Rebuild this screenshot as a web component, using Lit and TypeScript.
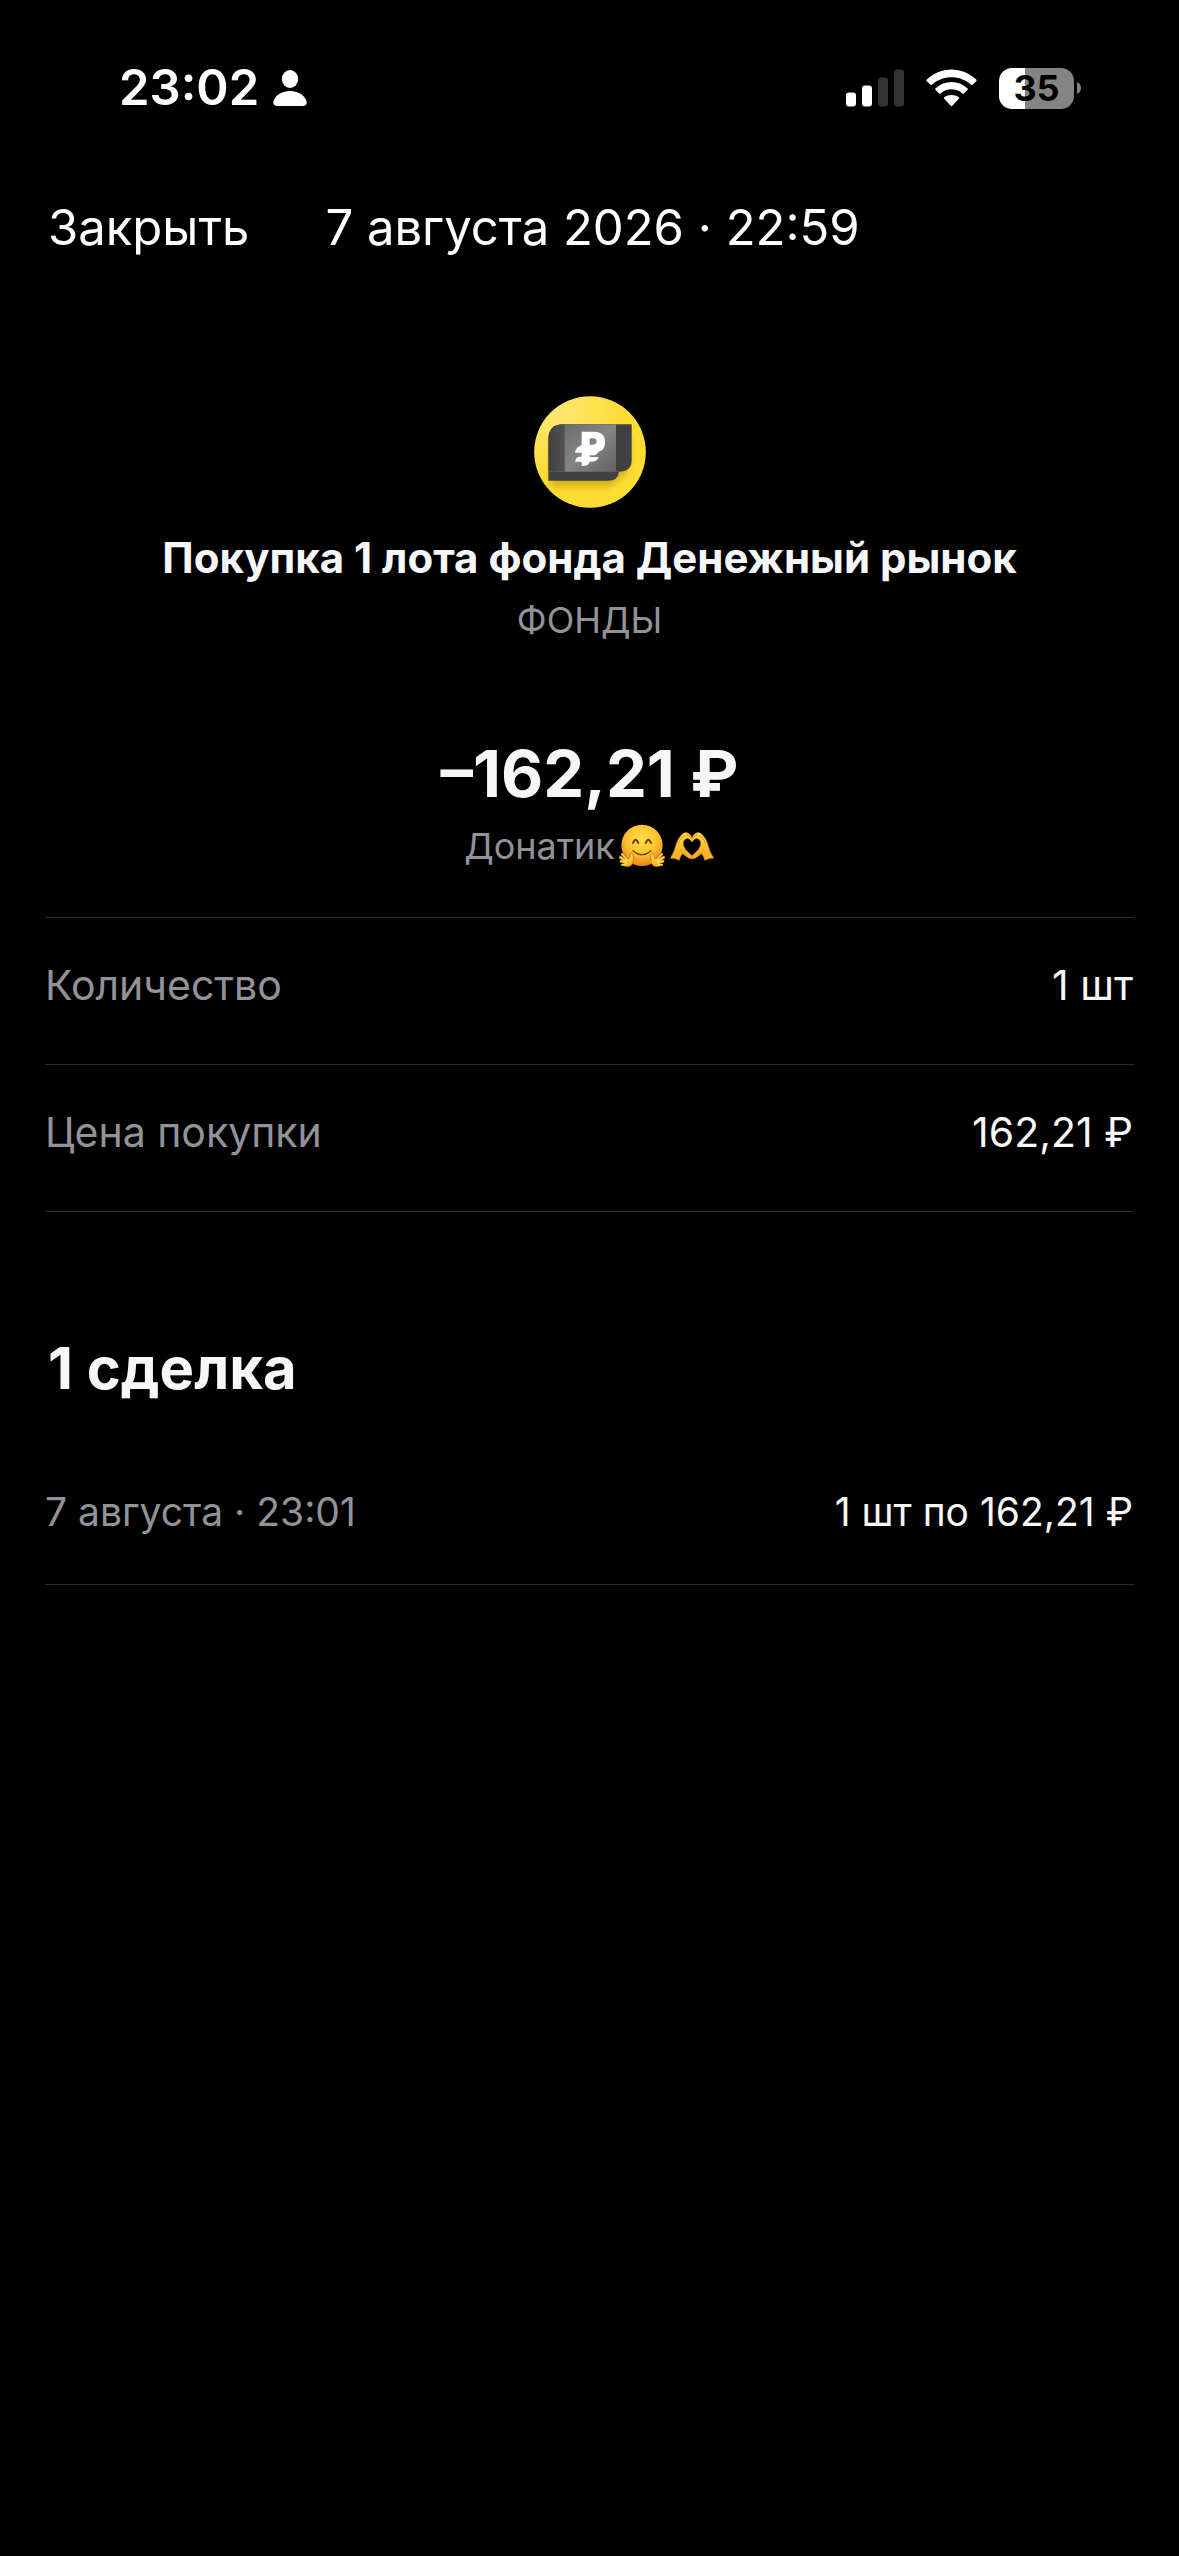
import { LitElement, html, css } from "lit";
import { customElement, property } from "lit/decorators.js";

@customElement("status-bar")
class StatusBar extends LitElement {
  static styles = css`
    :host { display: block; }
    .bar { display: flex; align-items: center; justify-content: space-between; height: 60px; padding: 0 98px 0 119px; }
    .left { display: flex; align-items: center; gap: 14px; }
    .right { display: flex; align-items: center; gap: 22px; }
    .time { font-size: 49px; line-height: 60px; font-weight: 600; }
    svg { display: block; }
    .battery { display: flex; align-items: center; gap: 3px; }
    .cell {
      display: flex; align-items: center; justify-content: center; width: 75px; height: 41px; border-radius: 13px;
      background: linear-gradient(90deg, #fff 35%, #848484 35%);
      color: #000; font-size: 36px; line-height: 41px; font-weight: 700;
    }
  `;
  render() {
    return html`<div class="bar">
      <div class="left">
        <time class="time">23:02</time>
        <svg width="34" height="37" viewBox="0 0 34 37" fill="#fff" aria-hidden="true">
          <ellipse cx="17" cy="9" rx="8.2" ry="9" />
          <path d="M4 36 Q0.3 36 0.3 32.6 C0.8 26.5 8 21 17 21 S33.2 26.5 33.7 32.6 Q33.7 36 30 36 Z" />
        </svg>
      </div>
      <div class="right">
        <svg width="58" height="38" viewBox="0 0 58 38" aria-hidden="true">
          <rect x="0" y="23.5" width="10" height="14" rx="3" fill="#fff" />
          <rect x="16" y="16.5" width="10" height="21" rx="3" fill="#fff" />
          <rect x="32" y="8.5" width="10" height="29" rx="3" fill="#333" />
          <rect x="48" y="0.5" width="10" height="37" rx="3" fill="#333" />
        </svg>
        <svg width="51" height="38" viewBox="0 0 51 38" fill="#fff" aria-hidden="true">
          <path d="M0.8 10.6 Q0 11.4 0.8 12.2 L4.5 15.8 Q5.2 16.4 5.9 15.8 C16.5 5.6 34.5 5.6 45.1 15.8 Q45.8 16.4 46.5 15.8 L50.2 12.2 Q51 11.4 50.2 10.6 C36.5 -2.9 14.5 -2.9 0.8 10.6 Z" />
          <path d="M9.4 19.4 Q8.7 20.1 9.4 20.8 L13.1 24.4 Q13.8 25.1 14.6 24.4 C20.6 18.8 30.4 18.8 36.4 24.4 Q37.2 25.1 37.9 24.4 L41.6 20.8 Q42.3 20.1 41.6 19.4 C32.6 10.8 18.4 10.8 9.4 19.4 Z" />
          <path d="M18.2 28.2 Q17.5 29 18.2 29.7 L24.7 36.8 Q25.5 37.6 26.3 36.8 L32.8 29.7 Q33.5 29 32.8 28.2 C28.7 25.1 22.3 25.1 18.2 28.2 Z" />
        </svg>
        <div class="battery">
          <div class="cell">35</div>
          <svg width="4" height="12" viewBox="0 0 4 12" aria-hidden="true"><path d="M0 0 Q4 1.6 4 6 T0 12 Z" fill="#848484" /></svg>
        </div>
      </div>
    </div>`;
  }
}

const fundLogo = html`<svg width="112" height="112" viewBox="42 46 336 336" role="img" aria-label="Денежный рынок">
  <defs>
    <radialGradient id="disc" cx="0.2" cy="0.15" r="0.6">
      <stop offset="0" stop-color="#ffe873" />
      <stop offset="1" stop-color="#fddc33" />
    </radialGradient>
    <linearGradient id="face" x1="0" y1="0" x2="1" y2="1">
      <stop offset="0" stop-color="#6d6d6d" />
      <stop offset="0.5" stop-color="#858585" />
      <stop offset="1" stop-color="#606060" />
    </linearGradient>
    <linearGradient id="side" x1="0" y1="0" x2="1" y2="0">
      <stop offset="0" stop-color="#404042" />
      <stop offset="1" stop-color="#535354" />
    </linearGradient>
    <filter id="soft" x="-20%" y="-20%" width="150%" height="160%"><feGaussianBlur stdDeviation="9" /></filter>
  </defs>
  <circle cx="210" cy="214" r="167.5" fill="url(#disc)" />
  <path d="M92 165 H330 V250 Q325 285 290 300 Q280 318 250 318 H92 Z" fill="#b38a00" opacity="0.5" filter="url(#soft)" />
  <path d="M130 131 H335 V238 Q335 273 297 273 Q294 300 264 300 H85 V176 Q85 131 130 131 Z" fill="#404042" />
  <path d="M130 131 H134 V273 H86 V176 Q86 131 130 131 Z" fill="url(#side)" />
  <path d="M86 273 H297" stroke="#626262" stroke-width="2" />
  <rect x="134" y="131" width="154" height="142" fill="url(#face)" />
  <path fill="#fff" fill-rule="evenodd" d="M185 153 H222 Q255 153 255 184 Q255 209 236 213 Q230 224 218 224 H209 V229 H236 Q232 243 216 243 H209 Q207 256 185 256 V243 H165 Q168 228 180 228 H185 V216 H165 Q168 198 185 194 Z M209 173 V192 H219 Q230 192 230 182 Q230 173 219 173 Z" />
</svg>`;

const hugEmoji = html`<svg width="46" height="44" viewBox="0 0 138 132" role="img" aria-label="🤗">
  <defs>
    <radialGradient id="skin" cx="0.5" cy="0.35" r="0.65">
      <stop offset="0" stop-color="#ffe04c" />
      <stop offset="0.6" stop-color="#fdc02b" />
      <stop offset="1" stop-color="#ea8419" />
    </radialGradient>
    <linearGradient id="palm" x1="0" y1="0" x2="0" y2="1">
      <stop offset="0" stop-color="#ffdf55" />
      <stop offset="1" stop-color="#f7ad25" />
    </linearGradient>
    <g id="hug-hand">
      <path d="M22 116 L6 112 M22 112 L4 100 M26 109 L10 91" stroke="#a8540c" stroke-width="9" stroke-linecap="round" />
      <path d="M12 124 Q18 110 27 105 Q31 103 33 98 Q33 85 39 87 Q44 92 43 105 Q44 120 34 126 Q22 131 12 124 Z" fill="url(#palm)" stroke="#b9640c" stroke-width="2" />
      <path d="M22 116 L6 112 M22 112 L4 100 M26 109 L10 91 M20 122 L9 122" stroke="#ffd34a" stroke-width="6" stroke-linecap="round" />
    </g>
  </defs>
  <circle cx="69" cy="64" r="62" fill="url(#skin)" />
  <path d="M42 57 Q50 37 58 57 M80 57 Q88 37 96 57" fill="none" stroke="#6b3f10" stroke-width="6" stroke-linecap="round" />
  <path d="M42 80 Q69 104 96 80" fill="none" stroke="#6b3f10" stroke-width="4" stroke-linecap="round" />
  <use href="#hug-hand" />
  <use href="#hug-hand" transform="translate(138 0) scale(-1 1)" />
</svg>`;

const heartHandsEmoji = html`<svg width="46" height="44" viewBox="0 0 138 132" role="img" aria-label="🫶">
  <defs>
    <linearGradient id="gold" x1="0" y1="0" x2="0" y2="1">
      <stop offset="0" stop-color="#ffd94a" />
      <stop offset="1" stop-color="#f6ab22" />
    </linearGradient>
    <g id="half-heart">
      <path d="M4 103 L15 82 L23 56 Q28 42 38 32 Q46 23 57 27 Q66 31 69 42 L69 54 Q60 40 51 44 Q41 49 43 62 Q46 76 60 87 L69 95 L69 104 Q61 106 54 99 L40 89 Q34 95 31 109 Q18 102 4 103 Z" fill="url(#gold)" stroke="#d98512" stroke-width="1.5" stroke-linejoin="round" />
      <path d="M28 58 Q33 44 46 35 M35 76 Q38 86 50 92 M53 33 Q60 33 66 42" fill="none" stroke="#dd8b16" stroke-width="2.5" stroke-linecap="round" />
    </g>
  </defs>
  <use href="#half-heart" />
  <use href="#half-heart" transform="translate(138 0) scale(-1 1)" />
</svg>`;

@customElement("detail-row")
class DetailRow extends LitElement {
  static styles = css`
    :host { display: block; border-bottom: 1px solid #2c2c2e; }
    .row { display: flex; justify-content: space-between; padding: 42px 1px 54px 0; font-size: 41px; line-height: 50px; }
    .deal { padding: 0 1px 49px 0; font-size: 39px; line-height: 46px; }
    .label { color: #929299; }
    .value { color: #f6f7f8; }
  `;
  @property() label = "";
  @property() value = "";
  @property({ type: Boolean }) deal = false;
  render() {
    return html`<div class="row ${this.deal ? "deal" : ""}">
      <span class="label">${this.label}</span><span class="value">${this.value}</span>
    </div>`;
  }
}

@customElement("app-root")
class AppRoot extends LitElement {
  static styles = css`
    :host {
      display: block; box-sizing: border-box; min-height: 100vh; padding-top: 58px;
      background: #000; color: #fff; font-family: Inter, "Noto Sans", sans-serif;
    }
    svg { display: block; }
    .nav { display: flex; gap: 76px; padding: 80px 48px 0; font-size: 49px; line-height: 60px; }
    .close { border: 0; padding: 0; background: none; color: inherit; font: inherit; cursor: pointer; }
    .when { margin: 0; font: inherit; }
    .summary { display: flex; flex-direction: column; align-items: center; padding: 138px 45px 48px; }
    .title { margin: 25px 0 14px; font-size: 42px; line-height: 50px; font-weight: 700; color: #f6f7f8; text-align: center; }
    .kind { margin: 0; font-size: 36px; line-height: 46px; color: #929299; }
    .amount { margin: 92px 0 10px; font-size: 65px; line-height: 78px; font-weight: 700; color: #f6f7f8; }
    .account { display: flex; align-items: center; gap: 4px; margin: 0; font-size: 36px; line-height: 46px; color: #929299; }
    .details { margin: 0 45px; border-top: 1px solid #2c2c2e; }
    .deals { margin: 120px 45px 0; }
    .heading { margin: 0 0 85px; padding-left: 3px; font-size: 58px; line-height: 72px; font-weight: 700; color: #f6f7f8; }
  `;
  render() {
    return html`
      <status-bar></status-bar>
      <header class="nav">
        <button class="close" type="button">Закрыть</button>
        <h1 class="when">7 августа 2026 · 22:59</h1>
      </header>
      <main>
        <section class="summary">
          ${fundLogo}
          <h2 class="title">Покупка 1 лота фонда Денежный рынок</h2>
          <p class="kind">ФОНДЫ</p>
          <p class="amount">–162,21 ₽</p>
          <p class="account"><span>Донатик</span>${hugEmoji}${heartHandsEmoji}</p>
        </section>
        <section class="details">
          <detail-row label="Количество" value="1 шт"></detail-row>
          <detail-row label="Цена покупки" value="162,21 ₽"></detail-row>
        </section>
        <section class="deals">
          <h2 class="heading">1 сделка</h2>
          <detail-row deal label="7 августа · 23:01" value="1 шт по 162,21 ₽"></detail-row>
        </section>
      </main>
    `;
  }
}
